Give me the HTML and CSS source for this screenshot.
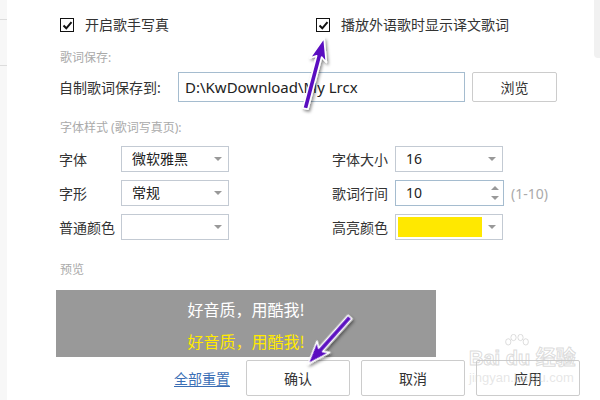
FILE: index.html
```html
<!DOCTYPE html>
<html lang="zh-CN">
<head>
    <meta charset="UTF-8">
    <title>歌词设置</title>
    <link rel="stylesheet" href="styles.css">
</head>
<body>
<div class="window">
    <div class="sidebar">
        <div class="side-item"></div>
        <div class="side-item"></div>
    </div>

    <div class="panel">
        <div class="check-row">
            <label class="check check-left"><span class="box">
                <svg viewBox="0 0 11 11" width="11" height="11"><path d="M1.5 5.5 L4.3 8.3 L9.5 2.2" fill="none" stroke="#111" stroke-width="2"/></svg>
            </span>开启歌手写真</label>
            <label class="check"><span class="box">
                <svg viewBox="0 0 11 11" width="11" height="11"><path d="M1.5 5.5 L4.3 8.3 L9.5 2.2" fill="none" stroke="#111" stroke-width="2"/></svg>
            </span>播放外语歌时显示译文歌词</label>
        </div>

        <div class="section-title title-save">歌词保存:</div>
        <div class="save-row">
            <span class="label">自制歌词保存到:</span>
            <div class="path-input">D:\KwDownload\My Lrcx</div>
            <button class="btn btn-browse">浏览</button>
        </div>

        <div class="section-title title-font">字体样式 (歌词写真页):</div>
        <div class="font-grid">
            <span class="label">字体</span>
            <div class="select">微软雅黑<i class="caret"></i></div>
            <span></span>
            <span class="label">字体大小</span>
            <div class="select">16<i class="caret"></i></div>

            <span class="label">字形</span>
            <div class="select">常规<i class="caret"></i></div>
            <span></span>
            <span class="label">歌词行间</span>
            <div class="spin-wrap">
                <div class="select spin">10<span class="spin-btns"><i class="up"></i><i class="down"></i></span></div>
                <span class="hint">(1-10)</span>
            </div>

            <span class="label">普通颜色</span>
            <div class="select"><i class="caret"></i></div>
            <span></span>
            <span class="label">高亮颜色</span>
            <div class="select swatch-select"><span class="swatch"></span><i class="caret"></i></div>
        </div>

        <div class="section-title title-preview">预览</div>
        <div class="preview">
            <p class="line-normal">好音质，用酷我!</p>
            <p class="line-hi">好音质，用酷我!</p>
        </div>

        <div class="actions">
            <a class="reset" href="#">全部重置</a>
            <button class="btn">确认</button>
            <button class="btn">取消</button>
            <button class="btn">应用</button>
        </div>
    </div>

    <div class="scroll-thumb"></div>

    <!-- faint site watermark -->
    <div class="watermark">
        <svg class="paw" width="30" height="16" viewBox="0 0 30 16">
            <g fill="none" stroke="rgba(200,200,200,0.7)" stroke-width="1">
                <ellipse cx="5" cy="9" rx="3" ry="3.6"/>
                <ellipse cx="11" cy="4" rx="3" ry="3.6"/>
                <ellipse cx="19" cy="4" rx="3" ry="3.6"/>
                <ellipse cx="25" cy="9" rx="3" ry="3.6"/>
            </g>
        </svg>
        <span class="wm-logo">Bai du 经验</span>
        <span class="wm-url">jingyan.baidu.com</span>
    </div>

    <!-- annotation arrows -->
    <svg class="arrows" width="600" height="400" viewBox="0 0 600 400">
        <defs>
            <filter id="shadow" x="-50%" y="-50%" width="200%" height="200%">
                <feDropShadow dx="1.5" dy="2" stdDeviation="1.6" flood-color="#000" flood-opacity="0.45"/>
            </filter>
        </defs>
        <g filter="url(#shadow)" fill="#5a0fc0" stroke="#fff" stroke-width="1.6" stroke-linejoin="round">
            <polygon transform="translate(324,38) rotate(14.8)" points="0,0 8.5,23 2.6,19 2.6,73 -2.6,73 -2.6,19 -8.5,23"/>
            <polygon transform="translate(308,364) rotate(-138.2)" points="0,0 8.5,23 2.6,19 2.6,63 -2.6,63 -2.6,19 -8.5,23"/>
        </g>
    </svg>
</div>
</body>
</html>
```

FILE: styles.css
```css
* {
    box-sizing: border-box;
}

body {
    margin: 0;
    font-family: "Noto Sans", "Noto Sans CJK SC", sans-serif;
    color: #333;
    background: #fff;
}

.window {
    position: relative;
    width: 600px;
    height: 400px;
    display: flex;
    overflow: hidden;
}

/* left nav strip */
.sidebar {
    width: 7px;
    background: #f7f7f7;
    padding-top: 19px;
}

.side-item {
    height: 46px;
    border-top: 1px solid #dcdcdc;
}

.panel {
    flex: 1;
    padding-left: 52px;
    display: flex;
    flex-direction: column;
    font-size: 14px;
}

.check-row {
    display: flex;
    margin-top: 17px;
    height: 16px;
    align-items: center;
}

.check {
    display: flex;
    align-items: center;
    line-height: 16px;
}

.check-left {
    width: 256px;
}

.box {
    width: 14px;
    height: 14px;
    border: 1px solid #111;
    margin: 0 11px 0 1px;
    display: flex;
    align-items: center;
    justify-content: center;
    background: #fff;
}

.section-title {
    font-size: 12px;
    color: #aaa;
    line-height: 16px;
    padding-left: 1px;
}

.title-save {
    margin-top: 17px;
}

.title-font {
    margin-top: 18px;
}

.title-preview {
    margin-top: 22px;
}

.save-row {
    display: flex;
    align-items: center;
    margin-top: 6px;
    height: 30px;
}

.save-row .label {
    width: 119px;
}

.path-input {
    width: 287px;
    height: 30px;
    border: 1px solid #a5bccf;
    padding-left: 6px;
    font-size: 15px;
    line-height: 28px;
    color: #222;
}

.btn {
    font-family: "Noto Sans CJK SC", sans-serif;
    font-size: 14px;
    color: #333;
    background: #fff;
    border: 1px solid #ccc;
    border-radius: 2px;
}

.btn-browse {
    width: 85px;
    height: 30px;
    margin-left: 7px;
}

.font-grid {
    display: grid;
    grid-template-columns: 62px 108px 103px 63px auto;
    grid-auto-rows: 26px;
    row-gap: 8px;
    margin-top: 10px;
    align-items: center;
}

.select {
    position: relative;
    width: 108px;
    height: 26px;
    border: 1px solid #c3cad3;
    padding-left: 10px;
    line-height: 24px;
    font-size: 14px;
    color: #222;
}

.caret {
    position: absolute;
    right: 6px;
    top: 10px;
    border-left: 4px solid transparent;
    border-right: 4px solid transparent;
    border-top: 4px solid #999;
}

.spin-wrap {
    display: flex;
    align-items: center;
}

.spin {
    width: 109px;
    border-color: #a5bccf;
}

.spin-btns i {
    position: absolute;
    right: 4px;
    border-left: 4px solid transparent;
    border-right: 4px solid transparent;
}

.spin-btns .up {
    top: 5px;
    border-bottom: 4px solid #999;
}

.spin-btns .down {
    top: 15px;
    border-top: 4px solid #999;
}

.hint {
    margin-left: 7px;
    color: #aaa;
    font-size: 14px;
}

.swatch-select {
    padding: 2px;
}

.swatch {
    display: block;
    width: 84px;
    height: 20px;
    background: #ffe800;
}

.preview {
    width: 380px;
    height: 67px;
    margin: 12px 0 0 -3px;
    background: #999;
    text-align: center;
    font-family: "Noto Sans CJK SC", sans-serif;
    font-size: 16px;
    padding-top: 7px;
}

.preview p {
    margin: 0;
    line-height: 24px;
}

.line-normal {
    color: #fff;
}

.line-hi {
    color: #ffea00;
    margin-top: 8px !important;
}

.actions {
    display: flex;
    align-items: center;
    margin-top: 3px;
    padding-left: 115px;
    height: 36px;
}

.reset {
    color: #3b6fb6;
    font-size: 14px;
    margin-right: 16px;
    text-underline-offset: 2px;
}

.actions .btn {
    width: 104px;
    height: 36px;
    margin-right: 11px;
}

.scroll-thumb {
    position: absolute;
    right: 0;
    top: 0;
    width: 6px;
    height: 58px;
    background: #f1f1f1;
    border-radius: 0 0 0 4px;
}

.watermark {
    position: absolute;
    left: 469px;
    top: 334px;
    display: flex;
    flex-direction: column;
    white-space: nowrap;
    font-family: "Liberation Sans", "Noto Sans CJK SC", sans-serif;
    pointer-events: none;
}

.paw {
    margin-left: 33px;
    height: 14px;
}

.wm-logo {
    font-size: 20px;
    font-weight: bold;
    line-height: 20px;
    color: transparent;
    -webkit-text-stroke: 1px rgba(200, 200, 200, 0.65);
}

.wm-url {
    font-size: 13px;
    line-height: 20px;
    color: rgba(210, 210, 210, 0.55);
}

.arrows {
    position: absolute;
    left: 0;
    top: 0;
    pointer-events: none;
}
```
